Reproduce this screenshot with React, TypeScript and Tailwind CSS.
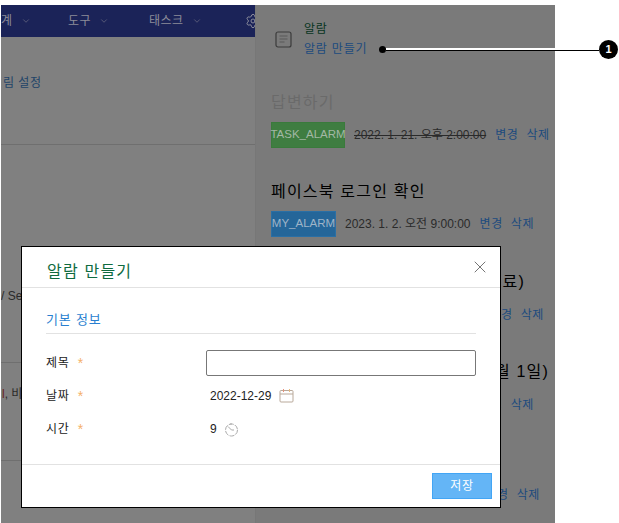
import { ChevronDown, Settings, X } from 'lucide-react';

const FONT = "font-['Liberation_Sans','Noto_Sans_CJK_KR',sans-serif]";

function Actions({ className = '' }: { className?: string }) {
  return (
    <span className={`flex gap-2 text-xs tracking-[0.6px] text-[#1c4a7e] ${className}`}>
      <span>변경</span>
      <span>삭제</span>
    </span>
  );
}

function NavItem({ label, width }: { label: string; width: string }) {
  return (
    <div className={`flex items-center shrink-0 gap-2 tracking-[0.5px] ${width}`}>
      <span>{label}</span>
      <ChevronDown size={10} strokeWidth={1.5} className="text-[#77778a]" />
    </div>
  );
}

function AlarmIcon() {
  return (
    <svg width="17" height="17" viewBox="0 0 17 17" fill="none" className="shrink-0">
      <rect x="1" y="1" width="15" height="15" rx="2" stroke="#3b3b3b" strokeWidth="1.2" />
      <path d="M4.5 5h8M4.5 8h8M4.5 11h5" stroke="#585858" strokeWidth="1.2" />
    </svg>
  );
}

function CalendarIcon() {
  return (
    <svg width="15" height="15" viewBox="0 0 15 15" fill="none" className="shrink-0 -mt-px">
      <rect x="1" y="2.5" width="13" height="11.5" rx="1" stroke="#b9a99a" />
      <path d="M1 6h13" stroke="#b9a99a" />
      <path d="M4.5 1v3" stroke="#e8927c" />
      <path d="M10.5 1v3" stroke="#e8b87c" />
    </svg>
  );
}

function ClockIcon() {
  return (
    <svg width="15" height="15" viewBox="0 0 15 15" fill="none" stroke="#aaa" strokeWidth="1" className="shrink-0">
      <circle cx="7.5" cy="8" r="6" strokeDasharray="5 1.2" />
      <path d="M4 4.5l3.5 3.5M7.5 8h2.5M7 1v2" />
    </svg>
  );
}

function Label({ text }: { text: string }) {
  return (
    <div className="flex items-center w-[160px] shrink-0 tracking-[0.8px]">
      <span>{text}</span>
      <span className="ml-2 text-sm leading-none text-[#f5b06a]">*</span>
    </div>
  );
}

function AlarmDialog() {
  return (
    <div className="absolute left-[21px] top-[246px] z-20 w-[480px] h-[262px] bg-white border border-black flex flex-col text-xs text-[#222]">
      <div className="h-[41px] shrink-0 border-b border-[#e2e2e2] flex items-center justify-between pl-[25px] pr-[10px]">
        <h2 className="mt-[10px] text-base tracking-[1.2px] text-[#0f6b3f]">알람 만들기</h2>
        <X size={20} strokeWidth={0.9} className="text-[#444]" />
      </div>
      <div className="flex-1 pl-6 pr-6">
        <div className="h-[46px] border-b border-[#e2e2e2] flex items-end pb-[5px] text-[13px] tracking-[0.8px] text-[#2a7fd0]">기본 정보</div>
        <div className="mt-4 flex items-center h-[26px]">
          <Label text="제목" />
          <input className="flex-1 h-[26px] border border-[#777] rounded-[2px] outline-none" />
        </div>
        <div className="mt-[7px] flex items-center h-[26px]">
          <Label text="날짜" />
          <div className="flex items-center gap-2 pl-[4px]">
            <span>2022-12-29</span>
            <CalendarIcon />
          </div>
        </div>
        <div className="mt-[7px] flex items-center h-[26px]">
          <Label text="시간" />
          <div className="flex items-center gap-[7px] pl-[4px]">
            <span>9</span>
            <ClockIcon />
          </div>
        </div>
      </div>
      <div className="h-[43px] shrink-0 border-t border-[#e2e2e2] flex items-start justify-end pt-2 pr-2">
        <button className="w-[60px] h-[26px] bg-[#64b5f6] border border-[#42a5f5] text-white text-xs tracking-[0.8px]">저장</button>
      </div>
    </div>
  );
}

function LeftPanel() {
  return (
    <div className="w-[254px] shrink-0 bg-[#808080] flex flex-col overflow-hidden text-xs">
      <div className="h-8 shrink-0 bg-[#1b2358] text-[#8c8c98] flex items-center">
        <div className="flex items-center">
          <NavItem label="계" width="w-[67px]" />
          <NavItem label="도구" width="w-[81px]" />
          <NavItem label="태스크" width="w-[96px]" />
          <Settings size={16} strokeWidth={1.3} className="shrink-0 text-[#9a9aa5]" />
        </div>
      </div>
      <div className="h-[108px] shrink-0 border-b border-[#6f6f6f] pt-[38px] pl-[2px] tracking-[0.5px] text-[#1f4468]">림 설정</div>
      <div className="h-[218px] shrink-0 border-b border-[#6f6f6f] pt-[143px] text-[#2a2a2a]">/ Se</div>
      <div className="h-[98px] shrink-0 border-b border-[#6f6f6f] pt-[23px] pl-[1px] text-[#2a2a2a]">
        <span className="text-[#682020]">l</span>, 비
      </div>
    </div>
  );
}

function RightPanel() {
  return (
    <div className="w-[300px] shrink-0 bg-[#7a7a7a] border-l border-[#777777] pl-[15px] text-xs flex flex-col">
      <div className="mt-[16px] flex items-center gap-3 pl-[4px]">
        <AlarmIcon />
        <div className="flex flex-col gap-[4px] tracking-[0.8px]">
          <span className="text-[#07351f]">알람</span>
          <span className="text-[#1c4a7e]">알람 만들기</span>
        </div>
      </div>
      <h3 className="mt-[34px] text-base tracking-[1.2px] text-[#6a6a6a]">답변하기</h3>
      <div className="mt-[7px] flex items-center gap-[9px]">
        <span className="h-[26px] w-[74px] flex items-center justify-center bg-[#3f7d41] border border-[#3a7a3c] text-[#a3b8a5] text-[11.5px]">TASK_ALARM</span>
        <span className="text-[#2a2a2a] line-through">2022. 1. 21. 오후 2:00:00</span>
        <Actions />
      </div>
      <h3 className="mt-[32px] text-base tracking-[1.2px] text-black">페이스북 로그인 확인</h3>
      <div className="mt-[7px] flex items-center gap-[9px]">
        <span className="h-[26px] w-[65px] flex items-center justify-center bg-[#256699] border border-[#2a6fa5] text-[#9fb4c8] text-[11.5px]">MY_ALARM</span>
        <span className="text-[#2a2a2a]">2023. 1. 2. 오전 9:00:00</span>
        <Actions />
      </div>
      <h3 className="mt-[33px] pr-[30px] text-right text-base tracking-[1.2px] text-black">계정 사용 기간 (유료)</h3>
      <Actions className="mt-[13px] justify-end pr-[11px]" />
      <h3 className="mt-[37px] pr-[6px] text-right text-base tracking-[1.2px] text-black">이용 기간 (12월 1일)</h3>
      <Actions className="mt-[13px] justify-end pr-[21px]" />
      <Actions className="mt-[74px] justify-end pr-[15px]" />
    </div>
  );
}

export default function App() {
  return (
    <div className={`w-[619px] h-[523px] bg-white overflow-hidden relative ${FONT}`}>
      <div className="absolute left-[1px] top-[5px] w-[554px] h-[518px] flex overflow-hidden">
        <LeftPanel />
        <RightPanel />
      </div>
      <div className="absolute left-[379px] top-[40px] z-20 flex items-center">
        <span className="w-[7px] h-[7px] rounded-full bg-black shrink-0" />
        <span className="w-[213px] h-[3px] flex flex-col shrink-0">
          <span className="h-[2px] bg-white" />
          <span className="h-[1px] bg-black" />
        </span>
        <span className="w-[19px] h-[19px] rounded-full bg-black text-white text-[11px] font-bold flex items-center justify-center shrink-0">1</span>
      </div>
      <AlarmDialog />
    </div>
  );
}
